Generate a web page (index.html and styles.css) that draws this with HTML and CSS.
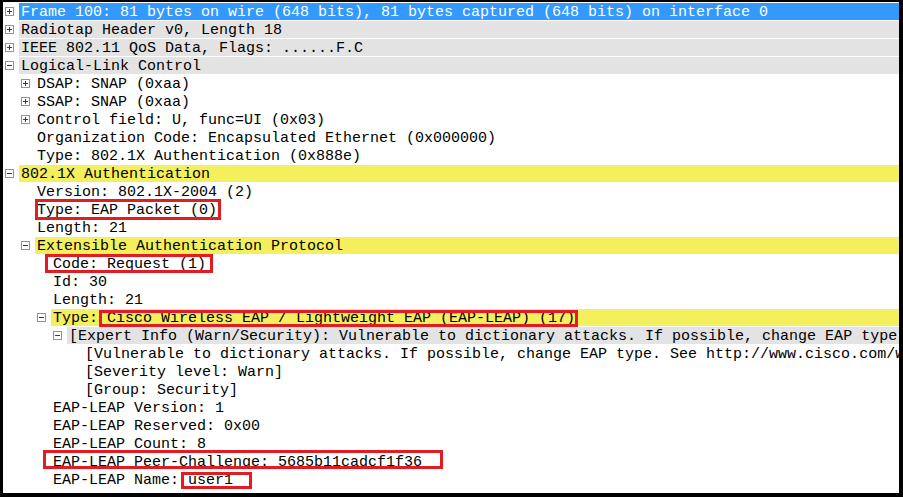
FILE: index.html
```html
<!DOCTYPE html>
<html lang="en">
<head>
    <meta charset="UTF-8">
    <title>Packet Details</title>
    <link rel="stylesheet" href="styles.css">
</head>
<body>
    <div class="tree">
        <div class="row"><span class="toggle"><i class="box plus"></i></span><span class="label selected">Frame 100: 81 bytes on wire (648 bits), 81 bytes captured (648 bits) on interface 0</span></div>
        <div class="row"><span class="toggle"><i class="box plus"></i></span><span class="label gray">Radiotap Header v0, Length 18</span></div>
        <div class="row"><span class="toggle"><i class="box plus"></i></span><span class="label gray">IEEE 802.11 QoS Data, Flags: ......F.C</span></div>
        <div class="row"><span class="toggle"><i class="box"></i></span><span class="label gray">Logical-Link Control</span></div>
        <div class="row lvl1"><span class="toggle"><i class="box plus"></i></span><span class="label">DSAP: SNAP (0xaa)</span></div>
        <div class="row lvl1"><span class="toggle"><i class="box plus"></i></span><span class="label">SSAP: SNAP (0xaa)</span></div>
        <div class="row lvl1"><span class="toggle"><i class="box plus"></i></span><span class="label">Control field: U, func=UI (0x03)</span></div>
        <div class="row lvl1"><span class="toggle"></span><span class="label">Organization Code: Encapsulated Ethernet (0x000000)</span></div>
        <div class="row lvl1"><span class="toggle"></span><span class="label">Type: 802.1X Authentication (0x888e)</span></div>
        <div class="row"><span class="toggle"><i class="box"></i></span><span class="label yellow">802.1X Authentication</span></div>
        <div class="row lvl1"><span class="toggle"></span><span class="label">Version: 802.1X-2004 (2)</span></div>
        <div class="row lvl1"><span class="toggle"></span><span class="label"><span class="note note-type">Type: EAP Packet (0)</span></span></div>
        <div class="row lvl1"><span class="toggle"></span><span class="label">Length: 21</span></div>
        <div class="row lvl1"><span class="toggle"><i class="box"></i></span><span class="label yellow">Extensible Authentication Protocol</span></div>
        <div class="row lvl2"><span class="toggle"></span><span class="label"><span class="note note-code">Code: Request (1)</span></span></div>
        <div class="row lvl2"><span class="toggle"></span><span class="label">Id: 30</span></div>
        <div class="row lvl2"><span class="toggle"></span><span class="label">Length: 21</span></div>
        <div class="row lvl2"><span class="toggle"><i class="box"></i></span><span class="label yellow">Type: <span class="note note-leap">Cisco Wireless EAP / Lightweight EAP (EAP-LEAP) (17)</span></span></div>
        <div class="row lvl3"><span class="toggle"><i class="box"></i></span><span class="label gray">[Expert Info (Warn/Security): Vulnerable to dictionary attacks. If possible, change EAP type. See http://www.cisco.com/warp/public/cc/pd/witc/ao1200ap/prodlit/vrfy_an.htm]</span></div>
        <div class="row lvl4"><span class="toggle"></span><span class="label">[Vulnerable to dictionary attacks. If possible, change EAP type. See http://www.cisco.com/warp/public/cc/pd/witc/ao1200ap/prodlit/vrfy_an.htm]</span></div>
        <div class="row lvl4"><span class="toggle"></span><span class="label">[Severity level: Warn]</span></div>
        <div class="row lvl4"><span class="toggle"></span><span class="label">[Group: Security]</span></div>
        <div class="row lvl2"><span class="toggle"></span><span class="label">EAP-LEAP Version: 1</span></div>
        <div class="row lvl2"><span class="toggle"></span><span class="label">EAP-LEAP Reserved: 0x00</span></div>
        <div class="row lvl2"><span class="toggle"></span><span class="label">EAP-LEAP Count: 8</span></div>
        <div class="row lvl2"><span class="toggle"></span><span class="label"><span class="note note-peer">EAP-LEAP Peer-Challenge: 5685b11cadcf1f36</span></span></div>
        <div class="row lvl2"><span class="toggle"></span><span class="label">EAP-LEAP Name: <span class="note note-user">user1</span></span></div>
    </div>
</body>
</html>
```

FILE: styles.css
```css
body {
    margin: 0;
    background: #fff;
}

.tree {
    box-sizing: border-box;
    width: 903px;
    height: 497px;
    padding: 1px 0 4px;
    border-style: solid;
    border-color: #000;
    border-width: 2px 4px 4px 3px;
    overflow: hidden;
    font-family: "Liberation Mono", monospace;
    font-size: 15px;
    color: #000;
}

.row {
    display: flex;
    height: 17px;
    margin-bottom: 1px;
    white-space: nowrap;
}

.lvl1 { padding-left: 16px; }
.lvl2 { padding-left: 32px; }
.lvl3 { padding-left: 48px; }
.lvl4 { padding-left: 64px; }

.toggle {
    flex: none;
    width: 16px;
    display: flex;
    align-items: center;
}

/* expander: minus by default, plus adds the vertical stroke */
.box {
    position: relative;
    box-sizing: border-box;
    width: 9px;
    height: 9px;
    margin-left: 2px;
    border: 1px solid #939393;
    background: #fff;
}

.box::before {
    content: "";
    position: absolute;
    left: 1px;
    top: 3px;
    width: 5px;
    height: 1px;
    background: #2a3c57;
}

.box.plus::after {
    content: "";
    position: absolute;
    left: 3px;
    top: 1px;
    width: 1px;
    height: 5px;
    background: #2a3c57;
}

.label {
    flex: 1;
    min-width: 0;
    box-sizing: border-box;
    padding: 3px 0 0 2px;
    line-height: 14px;
}

.selected {
    background: #3399ff;
    color: #fff;
}

.gray {
    background: #e3e3e3;
}

.yellow {
    background: #f4ef5c;
}

/* red annotation boxes */
.note {
    position: relative;
    display: inline-block;
}

.note::after {
    content: "";
    position: absolute;
    z-index: 1;
    border: 3px solid #e31b23;
}

.note-type::after { left: -2px; right: -4px; top: -5px; bottom: -2px; }
.note-code::after { left: -8px; right: -7px; top: -4px; bottom: -1px; }
.note-leap::after { left: -8px; right: -3px; top: -2px; bottom: -1px; }
.note-peer::after { left: -10px; right: -21px; top: -6px; bottom: 1px; }
.note-user::after { left: -7px; right: -19px; top: -2px; bottom: -1px; }
```
